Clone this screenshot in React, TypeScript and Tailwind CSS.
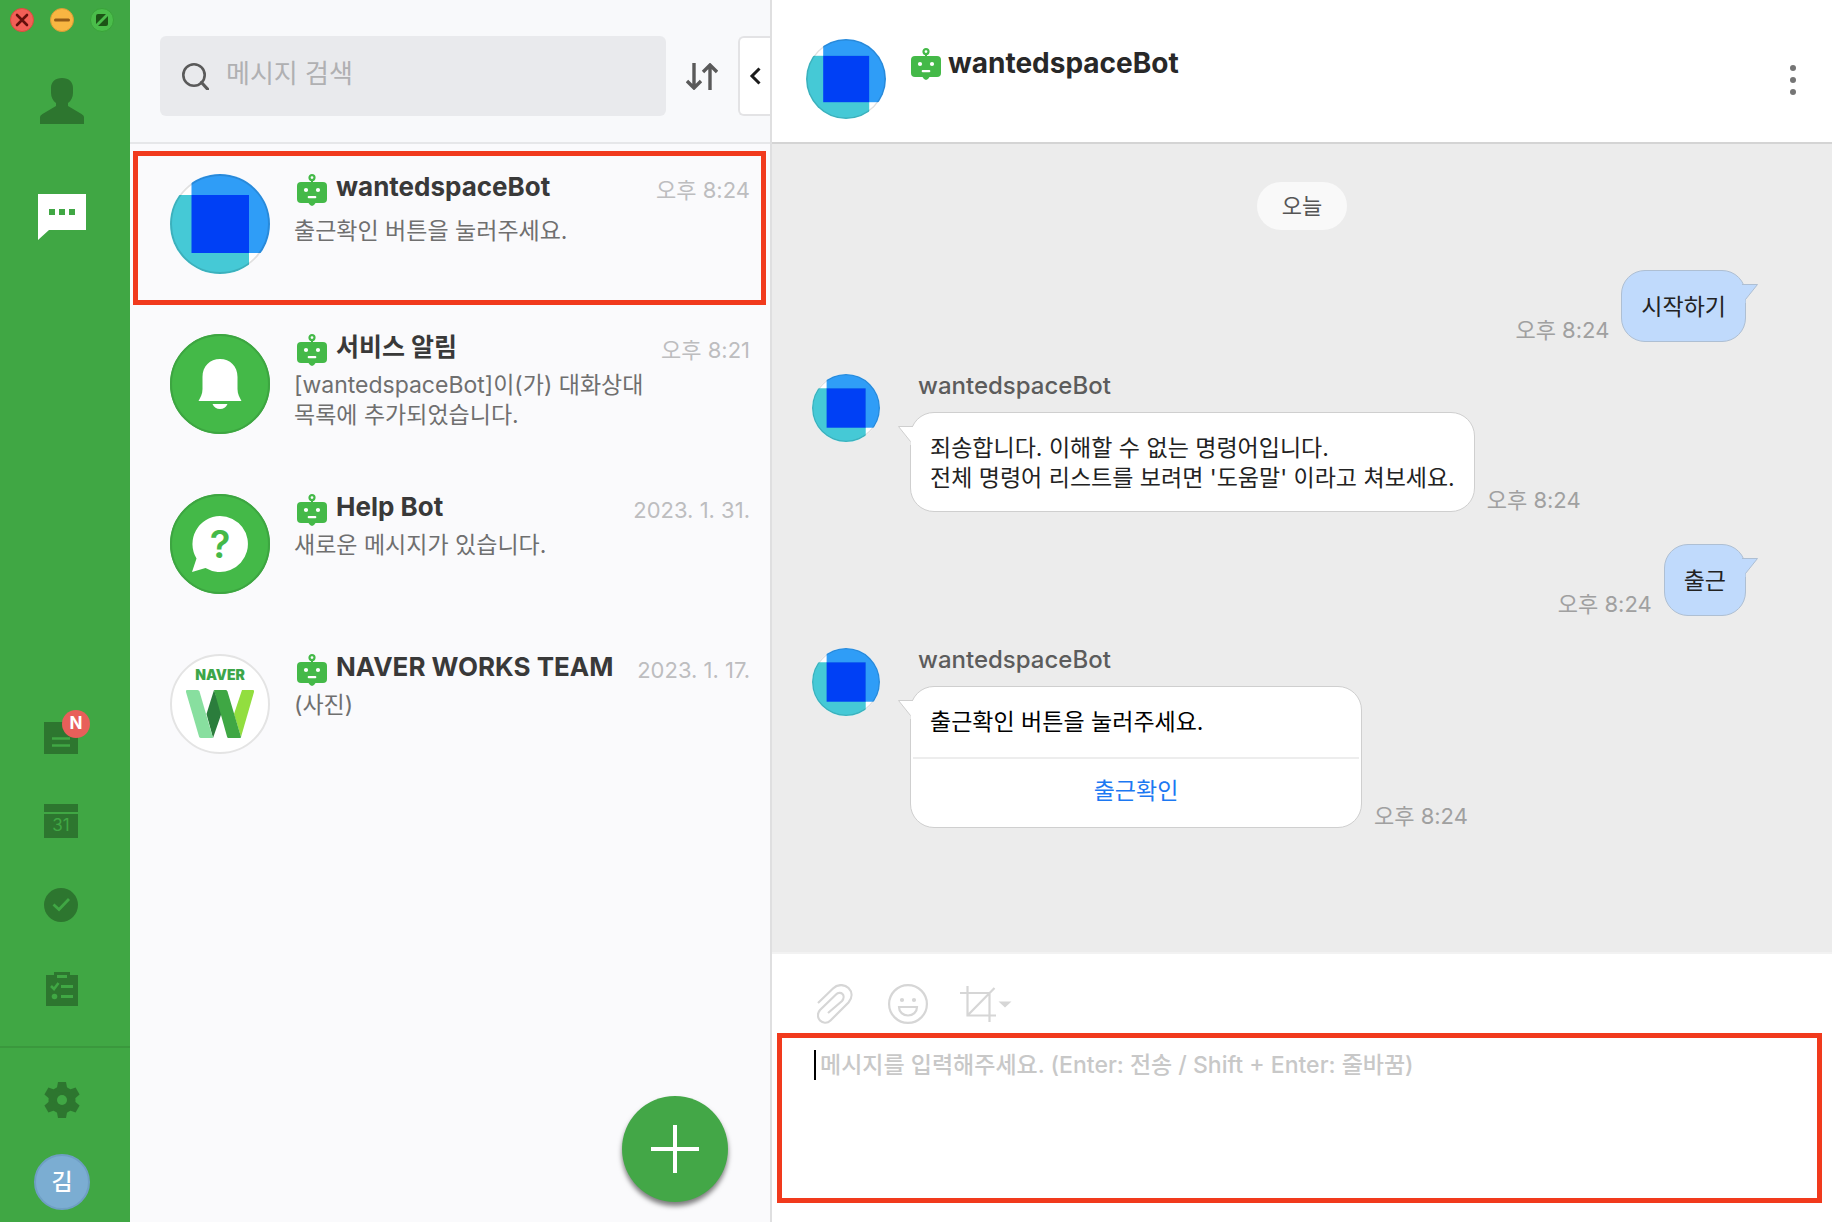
import React from "react";

function SpaceAvatar({ className }: { className: string }) {
  return (
    <svg viewBox="0 0 100 100" className={`shrink-0 rounded-full ${className}`} role="img" aria-label="wantedspaceBot">
      <rect width="100" height="100" fill="#ffffff" />
      <rect x="21.5" y="0" width="78.5" height="79" fill="#2f9df7" />
      <rect x="0" y="21" width="79" height="79" fill="#45c9d6" />
      <rect x="21.5" y="21" width="57.5" height="58" fill="#0040f5" />
      <circle cx="50" cy="50" r="49" fill="none" stroke="#000" strokeOpacity="0.12" strokeWidth="2" />
    </svg>
  );
}

function BellAvatar() {
  return (
    <svg viewBox="0 0 100 100" className="size-[100px] shrink-0" aria-hidden="true">
      <circle cx="50" cy="50" r="50" fill="#44b948" />
      <circle cx="50" cy="50" r="49" fill="none" stroke="#3da541" strokeWidth="2" />
      <path d="M32.5 43C32.5 32 40 25 50 25s17.500 7 17.500 18v12c0 5 2 8 4 12H28.500c2-4 4-7 4-12z" fill="#fff" />
      <path d="M42.500 70h15c-1.500 3.500-4 5-7.500 5s-6-1.500-7.500-5z" fill="#fff" />
    </svg>
  );
}

function HelpAvatar() {
  return (
    <svg viewBox="0 0 100 100" className="size-[100px] shrink-0" aria-hidden="true">
      <circle cx="50" cy="50" r="50" fill="#44b948" />
      <circle cx="50" cy="50" r="49" fill="none" stroke="#3da541" strokeWidth="2" />
      <path d="M50 22a28 28 0 1 1-14.500 52L22 78l4.500-13.500A28 28 0 0 1 50 22z" fill="#fff" />
      <text x="50" y="64" textAnchor="middle" fontSize="38" fontWeight="600" fill="#44b948">?</text>
    </svg>
  );
}

function WorksAvatar() {
  return (
    <svg viewBox="0 0 100 100" className="size-[100px] shrink-0" aria-hidden="true">
      <circle cx="50" cy="50" r="49" fill="#fff" stroke="#e4e4e4" strokeWidth="2" />
      <text x="50" y="25.500" textAnchor="middle" fontSize="14" fontWeight="900" fill="#3da649">NAVER</text>
      <path d="M44 36l8 22-9 26-6.500-24z" fill="#2b7d3c" />
      <path d="M72 36h11q1.500 0 1 2L71 83l-7-23z" fill="#92de3f" />
      <path d="M17 36h10.500q1.500 0 2 1.500L43 84H31q-1.500 0-2-1.500L16 38q-.5-2 1-2z" fill="#88df9f" />
      <path d="M44 36h12q1 0 1.500 1.500L71 83q0 1-1 1H58.500q-1.200 0-1.500-1.500z" fill="#3fa744" />
    </svg>
  );
}

function Robot() {
  return (
    <svg viewBox="0 0 30 32" className="h-8 w-[30px] shrink-0" aria-hidden="true">
      <circle cx="15" cy="3.600" r="2.500" fill="none" stroke="#44b948" strokeWidth="2.200" />
      <path d="M14 6h2v3h-2z" fill="#44b948" />
      <rect y="8" width="30" height="21" rx="4" fill="#44b948" />
      <path d="M11.500 29h7L17 31l-2 1-2-1z" fill="#44b948" />
      <circle cx="9" cy="16" r="2.100" fill="#fff" />
      <circle cx="21" cy="16" r="2.100" fill="#fff" />
      <rect x="10.700" y="22" width="8.600" height="2.200" rx="1" fill="#fff" />
    </svg>
  );
}

function Sidebar() {
  return (
    <nav aria-label="메뉴" className="flex w-[130px] shrink-0 flex-col items-center bg-[#40a744] pb-3">
      <div className="flex gap-4 self-start pt-2 pl-[10px]">
        <button aria-label="닫기" className="size-6">
          <svg viewBox="0 0 24 24">
            <circle cx="12" cy="12" r="11.500" fill="#f25f57" stroke="#dc4a3c" />
            <path d="M7 7l10 10M17 7L7 17" stroke="#650f0c" strokeWidth="2.600" strokeLinecap="round" />
          </svg>
        </button>
        <button aria-label="최소화" className="size-6">
          <svg viewBox="0 0 24 24">
            <circle cx="12" cy="12" r="11.500" fill="#f9b642" stroke="#d99b34" />
            <path d="M5.500 12h13" stroke="#945a16" strokeWidth="3" strokeLinecap="round" />
          </svg>
        </button>
        <button aria-label="전체 화면" className="size-6">
          <svg viewBox="0 0 24 24">
            <circle cx="12" cy="12" r="11.500" fill="#4abd4a" stroke="#3aa23a" />
            <path d="M6 16V8q0-2 2-2h8zM18 8v8q0 2-2 2H8z" fill="#1c5416" />
          </svg>
        </button>
      </div>
      <button aria-label="주소록" className="mt-[46px] mr-[6px]">
        <svg viewBox="0 0 44 46" className="h-[46px] w-11">
          <path
            d="M22 0c7 0 11 4 11 10v5c0 4-2 8-5 10v3l13.500 8q2.500 1.500 2.500 3v7H0v-7q0-1.500 2.500-3L16 28v-3c-3-2-5-6-5-10v-5C11 4 15 0 22 0z"
            fill="#2d762f"
          />
        </svg>
      </button>
      <button aria-label="메시지" className="mt-[70px] mr-[6px]">
        <svg viewBox="0 0 48 46" className="h-[46px] w-12">
          <path d="M0 0h48v36H11L0 46z" fill="#fff" />
          <path d="M11 15h6v6h-6zM21 15h6v6h-6zM31 15h6v6h-6z" fill="#40a744" />
        </svg>
      </button>
      <div className="mt-auto flex flex-col items-center gap-[50px]">
        <button aria-label="게시판" className="relative mr-2">
          <svg viewBox="0 0 34 32" className="h-8 w-[34px]">
            <path d="M0 0h34v32H0z" fill="#2d762f" />
            <path d="M8 16.500h18M8 23.500h18" stroke="#40a744" strokeWidth="2.600" />
          </svg>
          <span className="absolute -top-3 left-[18px] flex size-7 items-center justify-center rounded-full bg-[#e85f5a] text-[17px] font-bold text-white">
            N
          </span>
        </button>
        <button aria-label="캘린더" className="mr-2">
          <svg viewBox="0 0 34 34" className="size-[34px]">
            <path d="M0 0h34v8H0zM0 10h34v24H0z" fill="#2d762f" />
            <text x="17" y="27" textAnchor="middle" fontSize="17" fill="#40a744">31</text>
          </svg>
        </button>
        <button aria-label="할 일" className="mr-2">
          <svg viewBox="0 0 34 34" className="size-[34px]">
            <circle cx="17" cy="17" r="17" fill="#2d762f" />
            <path d="M9.500 16.500l5.500 5L25 11" fill="none" stroke="#40a744" strokeWidth="2.800" />
          </svg>
        </button>
        <button aria-label="설문" className="mr-[6px]">
          <svg viewBox="0 0 32 34" className="h-[34px] w-8">
            <path d="M0 3h8V0h16v3h8v31H0z" fill="#2d762f" />
            <path d="M11 3h10v3H11zM15 13h12v3H15zM15 23h12v3H15z" fill="#40a744" />
            <path d="M5 14l3 3 4.500-6" fill="none" stroke="#40a744" strokeWidth="2.600" />
            <circle cx="8.500" cy="24.500" r="2.800" fill="#40a744" />
          </svg>
        </button>
      </div>
      <hr className="mt-10 h-0.5 w-full border-0 bg-[#3a983d]" />
      <button aria-label="설정" className="mt-[34px] mr-[6px]">
        <svg viewBox="0 0 36 36" className="size-9">
          <g fill="#2d762f">
            <circle cx="18" cy="18" r="13.500" />
            <path id="tooth" d="M14 0h8l1.500 8v20L22 36h-8l-1.500-8V8z" />
            <use href="#tooth" transform="rotate(60 18 18)" />
            <use href="#tooth" transform="rotate(120 18 18)" />
          </g>
          <circle cx="18" cy="18" r="5" fill="#40a744" />
        </svg>
      </button>
      <button className="mt-9 mr-[6px] flex size-14 items-center justify-center rounded-full border-2 border-[#6f9fc4] bg-[#7badd2] text-[23px] font-medium text-white">
        김
      </button>
    </nav>
  );
}

type Room = { name: string; time: string; preview: string; avatar: React.ReactNode; selected?: boolean };

const rooms: Room[] = [
  {
    name: "wantedspaceBot",
    time: "오후 8:24",
    preview: "출근확인 버튼을 눌러주세요.",
    avatar: <SpaceAvatar className="size-[100px]" />,
    selected: true,
  },
  {
    name: "서비스 알림",
    time: "오후 8:21",
    preview: "[wantedspaceBot]이(가) 대화상대\n목록에 추가되었습니다.",
    avatar: <BellAvatar />,
  },
  { name: "Help Bot", time: "2023. 1. 31.", preview: "새로운 메시지가 있습니다.", avatar: <HelpAvatar /> },
  { name: "NAVER WORKS TEAM", time: "2023. 1. 17.", preview: "(사진)", avatar: <WorksAvatar /> },
];

const hasHangul = (text: string) => /[가-힣]/.test(text);

function RoomList() {
  return (
    <section className="relative flex w-[642px] shrink-0 flex-col border-r-2 border-[#dfdfe0] bg-[#fafafc]">
      <div className="flex h-36 items-center border-b-2 border-[#e6e7e9] bg-[#f8f9fb] pt-[10px] pl-[30px]">
        <label className="flex h-20 flex-1 items-center gap-[17px] rounded-md bg-[#e9eaed] pl-[22px]">
          <svg viewBox="0 0 27 27" className="size-[27px] shrink-0">
            <circle cx="12" cy="12" r="10.700" fill="none" stroke="#5a5a5a" strokeWidth="2.600" />
            <path d="M19.500 19.500l6 6.500" stroke="#5a5a5a" strokeWidth="3.200" strokeLinecap="round" />
          </svg>
          <input
            aria-label="메시지 검색"
            placeholder="메시지 검색"
            className="w-full bg-transparent pb-1 text-[26px] leading-8 outline-none placeholder:text-[#b0b0b2]"
          />
        </label>
        <button aria-label="정렬" className="ml-5">
          <svg viewBox="0 0 32 27" className="h-[27px] w-8" fill="none" stroke="#5a5a5a" strokeWidth="3.400">
            <path d="M8 0v25M1 18l7 7 7-7M24 27V2M17 9l7-7 7 7" />
          </svg>
        </button>
        <button
          aria-label="목록 접기"
          className="ml-5 flex h-20 w-8 items-center justify-center rounded-l-md border-2 border-r-0 border-[#e3e3e5] bg-white"
        >
          <svg viewBox="0 0 12 18" className="h-[18px] w-3">
            <path d="M10.500 1.500L3 9l7.500 7.500" fill="none" stroke="#1c1c1c" strokeWidth="3" />
          </svg>
        </button>
      </div>
      <ul>
        {rooms.map((room) => (
          <li key={room.name} className="relative flex h-40 pt-[30px] pr-5 pl-10">
            {room.avatar}
            <div className="ml-6 min-w-0 flex-1">
              <div className="flex items-center">
                <span className="ml-[3px] flex">
                  <Robot />
                </span>
                <h2
                  className={`ml-[9px] flex-1 pb-[6px] leading-[26px] font-bold whitespace-nowrap text-[#393939] ${hasHangul(room.name) ? "text-[25px]" : "text-[26px]"}`}
                >
                  {room.name}
                </h2>
                <time className="text-[22px] leading-8 text-[#bdbdbf]">{room.time}</time>
              </div>
              <p
                className={`text-[23px] leading-[30px] whitespace-pre-line text-[#6f6f6f] ${room.selected ? "mt-[10px]" : "mt-1"}`}
              >
                {room.preview}
              </p>
            </div>
            {room.selected && (
              <div className="pointer-events-none absolute top-[7px] right-1 -bottom-px left-[3px] border-5 border-[#f13a1d]" />
            )}
          </li>
        ))}
      </ul>
      <button
        aria-label="새 메시지"
        className="absolute right-[42px] bottom-5 flex size-[106px] items-center justify-center rounded-full bg-[#43a747] shadow-[0_4px_5px_rgba(0,0,0,0.5)]"
      >
        <svg viewBox="0 0 48 48" className="size-12">
          <path d="M24 0v48M0 24h48" stroke="#fff" strokeWidth="4" />
        </svg>
      </button>
    </section>
  );
}

function SentMessage({ text }: { text: string }) {
  return (
    <div className="flex items-end justify-end gap-3 pr-[86px]">
      <time className="text-[22px] leading-6 text-[#a0a0a0]">오후 8:24</time>
      <div className="relative rounded-3xl border border-[#aebfd3] bg-[#c0dafc] px-[19px] pt-[21px] pb-[19px] text-[23px] leading-[30px] text-[#222]">
        {text}
        <svg viewBox="0 0 17 19" className="absolute top-[13px] -right-[14px] h-[19px] w-[17px]">
          <path d="M0 .5h15.500L3.500 15.500V19H0z" fill="#c0dafc" />
          <path d="M0 .5h15.500L3.500 15.500" fill="none" stroke="#aebfd3" />
        </svg>
      </div>
    </div>
  );
}

function ReceivedMessage({ children }: { children: React.ReactNode }) {
  return (
    <div className="flex pl-10">
      <SpaceAvatar className="size-[68px]" />
      <div className="ml-[30px]">
        <div className="ml-2 text-[24px] leading-6 font-medium text-[#5c5c5c]">wantedspaceBot</div>
        <div className="mt-[14px] flex items-end gap-3">
          <div className="relative rounded-3xl border border-[#cfcfcf] bg-white text-[23px] leading-[30px]">
            {children}
            <svg viewBox="0 0 17 19" className="absolute top-[13px] -left-[14px] h-[19px] w-[17px]">
              <path d="M17 .5H1.500L13.500 15.500V19H17z" fill="#fff" />
              <path d="M16 .5H1.500L13.500 15.500" fill="none" stroke="#cfcfcf" />
            </svg>
          </div>
          <time className="text-[22px] leading-6 text-[#a0a0a0]">오후 8:24</time>
        </div>
      </div>
    </div>
  );
}

function Chat() {
  return (
    <main className="flex min-w-0 flex-1 flex-col bg-white">
      <header className="flex h-36 shrink-0 items-center border-b-2 border-[#d4d4d4] pt-4 pr-9 pl-[34px]">
        <SpaceAvatar className="size-20" />
        <div className="ml-[25px] flex flex-1 items-center pb-[30px]">
          <Robot />
          <h1 className="ml-[7px] pb-0.5 text-[28px] leading-[30px] font-bold text-[#282828]">wantedspaceBot</h1>
        </div>
        <button aria-label="더보기" className="pt-0.5">
          <svg viewBox="0 0 6 30" className="h-[30px] w-[6px]" fill="#757575">
            <circle cx="3" cy="3" r="3" />
            <circle cx="3" cy="15" r="3" />
            <circle cx="3" cy="27" r="3" />
          </svg>
        </button>
      </header>
      <div className="flex flex-1 flex-col gap-8 border-b-2 border-[#f2f2f2] bg-[#ececec] pt-[38px]">
        <div className="mb-2 self-center rounded-full bg-[#f9f9f9] px-[25px] text-[22px] leading-[48px] text-[#555]">오늘</div>
        <SentMessage text="시작하기" />
        <ReceivedMessage>
          <p className="px-[19px] pt-5 pb-[18px] text-[#222]">
            죄송합니다. 이해할 수 없는 명령어입니다.
            <br />
            전체 명령어 리스트를 보려면 '도움말' 이라고 쳐보세요.
          </p>
        </ReceivedMessage>
        <SentMessage text="출근" />
        <ReceivedMessage>
          <div className="w-[450px] px-0.5">
            <p className="px-[17px] py-5 text-black">출근확인 버튼을 눌러주세요.</p>
            <button className="block h-[70px] w-full border-t-2 border-[#ededed] pb-1 text-[#1c78f2]">출근확인</button>
          </div>
        </ReceivedMessage>
      </div>
      <footer className="shrink-0 pb-[19px]">
        <div className="flex h-[79px] items-center pt-[21px] pl-[45px]">
          <button aria-label="파일 첨부">
            <svg viewBox="0 0 36 40" className="h-10 w-9" fill="none" stroke="#d6d6d6" strokeWidth="2.200">
              <path d="M1 19L16 4.500C21-.5 28 .5 31.500 4s4.500 9 0 14.500L13.500 36.500c-3.500 3.500-8 2.500-10.500 0s-3-7 0-10.500L19 10.500c2-2 5-2 6.500-.5s1.500 4.500-.5 7L11 29" />
            </svg>
          </button>
          <button aria-label="스티커" className="ml-[35px]">
            <svg viewBox="0 0 40 40" className="size-10" fill="none" stroke="#d6d6d6" strokeWidth="2.200">
              <circle cx="20" cy="20" r="18.900" />
              <circle cx="14" cy="16" r="1" />
              <circle cx="26" cy="16" r="1" />
              <path d="M11 23h18c0 5-4 8.500-9 8.500s-9-3.500-9-8.500z" />
            </svg>
          </button>
          <button aria-label="화면 캡처" className="ml-8">
            <svg viewBox="0 0 52 36" className="h-9 w-[52px]" fill="none" stroke="#d6d6d6" strokeWidth="2.200">
              <path d="M7.500 0v29.500H36M0 7h29.500v29M7.500 29.500L34.500 2" />
              <path d="M38.500 15.500h13L45 21.500z" fill="#d6d6d6" stroke="none" />
            </svg>
          </button>
        </div>
        <div className="mr-[10px] ml-[5px] flex h-[170px] border-5 border-[#f13a1d] pt-3 pl-8">
          <span className="h-[30px] w-0.5 bg-black" />
          <textarea
            aria-label="메시지 입력"
            placeholder="메시지를 입력해주세요. (Enter: 전송 / Shift + Enter: 줄바꿈)"
            className="ml-1 flex-1 resize-none text-[23px] leading-[30px] outline-none placeholder:font-medium placeholder:text-[#c8c8c8]"
          />
        </div>
      </footer>
    </main>
  );
}

export default function App() {
  return (
    <div className="flex min-h-screen bg-white font-[Inter,'Noto_Sans_CJK_KR',sans-serif]" lang="ko">
      <Sidebar />
      <RoomList />
      <Chat />
    </div>
  );
}
